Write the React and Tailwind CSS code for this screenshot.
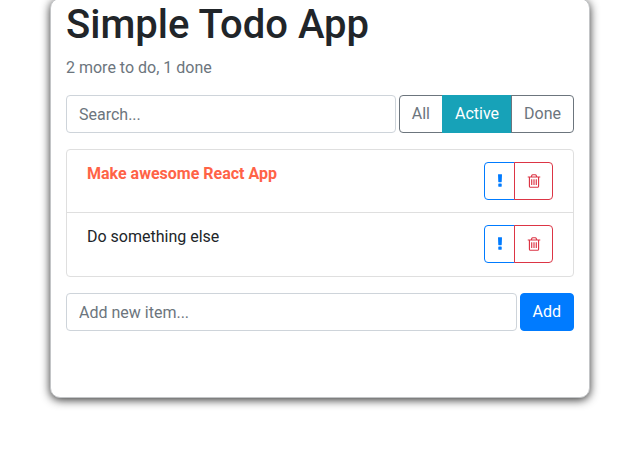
import React from "react";

function Exclamation() {
  return (
    <svg className="-ml-[5.14px] -mr-[5.14px] block size-4 shrink-0" viewBox="0 0 1792 1792" fill="currentColor" aria-hidden="true">
      <path d="M1088 1248v224q0 26-19 45t-45 19h-256q-26 0-45-19t-19-45v-224q0-26 19-45t45-19h256q26 0 45 19t19 45zm30-1056l-28 768q-1 26-20.500 45t-45.500 19h-256q-26 0-45.500-19t-20.500-45l-28-768q-1-26 17.500-45t44.500-19h320q26 0 44.500 19t17.500 45z" />
    </svg>
  );
}

function Trash() {
  return (
    <svg className="-mx-[1.71px] block size-4 shrink-0" viewBox="0 0 1792 1792" fill="currentColor" aria-hidden="true">
      <path d="M704 736v576q0 14-9 23t-23 9h-64q-14 0-23-9t-9-23v-576q0-14 9-23t23-9h64q14 0 23 9t9 23zm256 0v576q0 14-9 23t-23 9h-64q-14 0-23-9t-9-23v-576q0-14 9-23t23-9h64q14 0 23 9t9 23zm256 0v576q0 14-9 23t-23 9h-64q-14 0-23-9t-9-23v-576q0-14 9-23t23-9h64q14 0 23 9t9 23zm128 724v-948h-896v948q0 22 7 40.500t14.500 27 10.500 8.500h832q3 0 10.500-8.500t14.500-27 7-40.500zm-672-1076h448l-48-117q-7-9-17-11h-317q-10 2-17 11zm928 32v64q0 14-9 23t-23 9h-96v948q0 83-47 143.500t-113 60.500h-832q-66 0-113-58.500t-47-141.500v-952h-96q-14 0-23-9t-9-23v-64q0-14 9-23t23-9h309l70-167q15-37 54-63t79-26h320q40 0 79 26t54 63l70 167h309q14 0 23 9t9 23z" />
    </svg>
  );
}

const items = [
  { id: 1, label: "Make awesome React App", important: true },
  { id: 2, label: "Do something else", important: false },
];

function TodoItem({ label, important }) {
  return (
    <li className="flex h-[63px] items-start justify-between border-b border-[#dfdfdf] px-5 pt-3 last:border-b-0">
      <span className={important ? "font-bold text-[#ff6347]" : "text-[#212529]"}>{label}</span>
      <span className="flex">
        <button aria-label="Mark important" className="flex h-[38px] items-center rounded-l border border-[#007bff] px-3 text-[#007bff]">
          <Exclamation />
        </button>
        <button aria-label="Delete" className="-ml-px flex h-[38px] items-center rounded-r border border-[#dc3545] px-3 text-[#dc3545]">
          <Trash />
        </button>
      </span>
    </li>
  );
}

export default function App() {
  return (
    <div className="h-[474px] overflow-hidden bg-white font-[Roboto,sans-serif] text-base text-[#212529]">
      <main className="-mt-[2px] ml-[50px] h-[400px] w-[540px] rounded-[10px] border border-[#c3c5c7] bg-white px-[15px] pt-[2px] shadow-[0_2px_10px_#333]">
        <h1 className="text-[40px] leading-[48px] font-medium">Simple Todo App</h1>
        <h2 className="mt-[7px] leading-6 text-[#6c757d]">2 more to do, 1 done</h2>
        <div className="mt-[15px] flex gap-[3px]">
          <input
            className="h-[38px] min-w-0 flex-1 rounded border border-[#ced4da] px-3 placeholder:text-[#6c757d]"
            placeholder="Search..."
          />
          <div className="flex text-[#6c757d]">
            <button className="h-[38px] rounded-l border border-[#6c757d] px-3">All</button>
            <button className="-ml-px h-[38px] border border-[#17a2b8] bg-[#17a2b8] px-3 text-white">Active</button>
            <button className="-ml-px h-[38px] rounded-r border border-[#6c757d] px-3">Done</button>
          </div>
        </div>
        <ul className="mt-4 rounded border border-[#dfdfdf]">
          {items.map((item) => (
            <TodoItem key={item.id} label={item.label} important={item.important} />
          ))}
        </ul>
        <form className="mt-4 flex gap-[3px]">
          <input
            className="h-[38px] min-w-0 flex-1 rounded border border-[#ced4da] px-3 placeholder:text-[#6c757d]"
            placeholder="Add new item..."
          />
          <button type="button" className="h-[38px] rounded border border-[#007bff] bg-[#007bff] px-3 text-white">Add</button>
        </form>
      </main>
    </div>
  );
}
